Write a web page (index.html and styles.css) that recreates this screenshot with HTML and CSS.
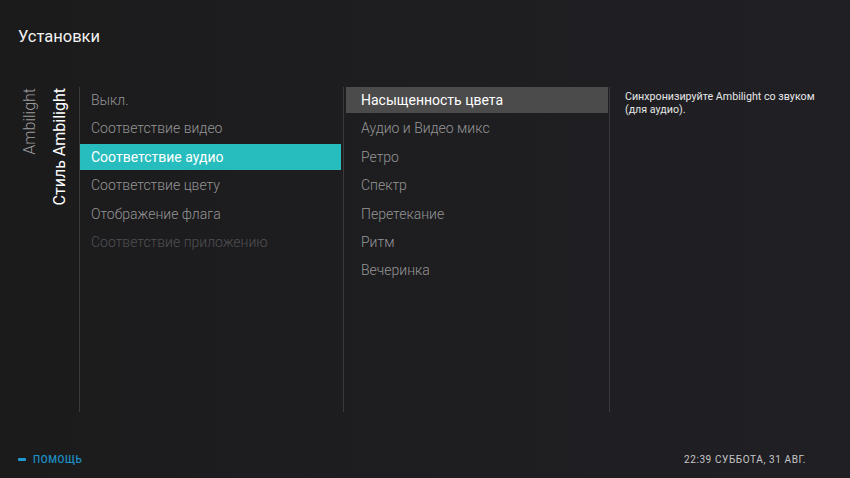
FILE: index.html
```html
<!DOCTYPE html>
<html lang="ru">
<head>
<meta charset="utf-8">
<title>Установки</title>
<link rel="stylesheet" href="styles.css">
</head>
<body>
<div class="screen">
  <header class="header"><h1 class="title">Установки</h1></header>
  <main class="main">
    <nav class="crumbs">
      <div class="crumb">Ambilight</div>
      <div class="crumb crumb-current">Стиль Ambilight</div>
    </nav>
    <section class="col col-first">
      <ul class="list">
        <li class="item">Выкл.</li>
        <li class="item">Соответствие видео</li>
        <li class="item item-active">Соответствие аудио</li>
        <li class="item">Соответствие цвету</li>
        <li class="item">Отображение флага</li>
        <li class="item item-disabled">Соответствие приложению</li>
      </ul>
    </section>
    <section class="col col-second">
      <ul class="list">
        <li class="item item-focus">Насыщенность цвета</li>
        <li class="item">Аудио и Видео микс</li>
        <li class="item">Ретро</li>
        <li class="item">Спектр</li>
        <li class="item">Перетекание</li>
        <li class="item">Ритм</li>
        <li class="item">Вечеринка</li>
      </ul>
    </section>
    <section class="desc">
      <p class="desc-text">Синхронизируйте Ambilight со звуком (для аудио).</p>
    </section>
  </main>
  <footer class="footer">
    <div class="help"><span class="help-dash"></span><span class="help-label">ПОМОЩЬ</span></div>
    <div class="clock">22:39 СУББОТА, 31 АВГ.</div>
  </footer>
</div>
</body>
</html>
```
FILE: styles.css
```css
* { box-sizing: border-box; }
html, body { margin: 0; padding: 0; }
body {
  width: 850px;
  height: 478px;
  overflow: hidden;
  font-family: Roboto, "Noto Sans", sans-serif;
  background: linear-gradient(90deg, #1b1b1c 0%, #1e1e21 50%, #201f24 100%);
  color: #fff;
}
.screen {
  width: 850px;
  height: 478px;
  display: flex;
  flex-direction: column;
}
.header {
  height: 87px;
  padding: 26px 0 0 18px;
}
.title {
  margin: 0;
  font-size: 16.5px;
  font-weight: 400;
  line-height: 22px;
  color: #f2f2f2;
}
.main {
  display: flex;
  height: 325px;
}
.crumbs {
  width: 79px;
  display: flex;
  align-items: flex-start;
  padding-left: 20px;
  gap: 11px;
  padding-top: 1px;
}
.crumb {
  writing-mode: vertical-rl;
  transform: rotate(180deg);
  font-size: 16px;
  line-height: 19px;
  font-weight: 300;
  color: #9a9a9a;
  white-space: nowrap;
}
.crumb-current {
  color: #fff;
  font-weight: 400;
}
.col {
  width: 265px;
  border-right: 1px solid #3a3a3d;
}
.col-first {
  width: 265px;
  border-left: 1px solid #3a3a3d;
  padding-right: 2px;
}
.col-second {
  width: 266px;
  padding: 0 1px 0 2px;
}
.list {
  list-style: none;
  margin: 0;
  padding: 0;
  display: flex;
  flex-direction: column;
  gap: 2.4px;
}
.item {
  height: 26px;
  line-height: 26px;
  font-size: 14px;
  font-weight: 300;
  padding-left: 11px;
  color: #959595;
  white-space: nowrap;
}
.col-second .item { padding-left: 15px; }
.item-active {
  background: #27bcbd;
  color: #fff;
  font-weight: 400;
}
.item-focus {
  background: #4b4b4c;
  color: #fff;
  font-weight: 400;
}
.item-disabled {
  color: #505052;
}
.desc {
  flex: 1;
  padding: 4px 10px 0 15px;
}
.desc-text {
  margin: 0;
  font-size: 10.7px;
  line-height: 12.5px;
  color: #e6e6e6;
  width: 200px;
}
.footer {
  flex: 1;
  display: flex;
  justify-content: space-between;
  align-items: center;
  padding: 28px 44px 0 18px;
}
.help {
  display: flex;
  align-items: center;
  gap: 7px;
}
.help-dash {
  width: 8px;
  height: 3px;
  background: #1e9ad2;
  border-radius: 1px;
}
.help-label {
  font-size: 10px;
  letter-spacing: 0.6px;
  color: #1d8fc2;
  font-weight: 500;
}
.clock {
  font-size: 10px;
  letter-spacing: 0.6px;
  color: #c6c6c6;
}
```
